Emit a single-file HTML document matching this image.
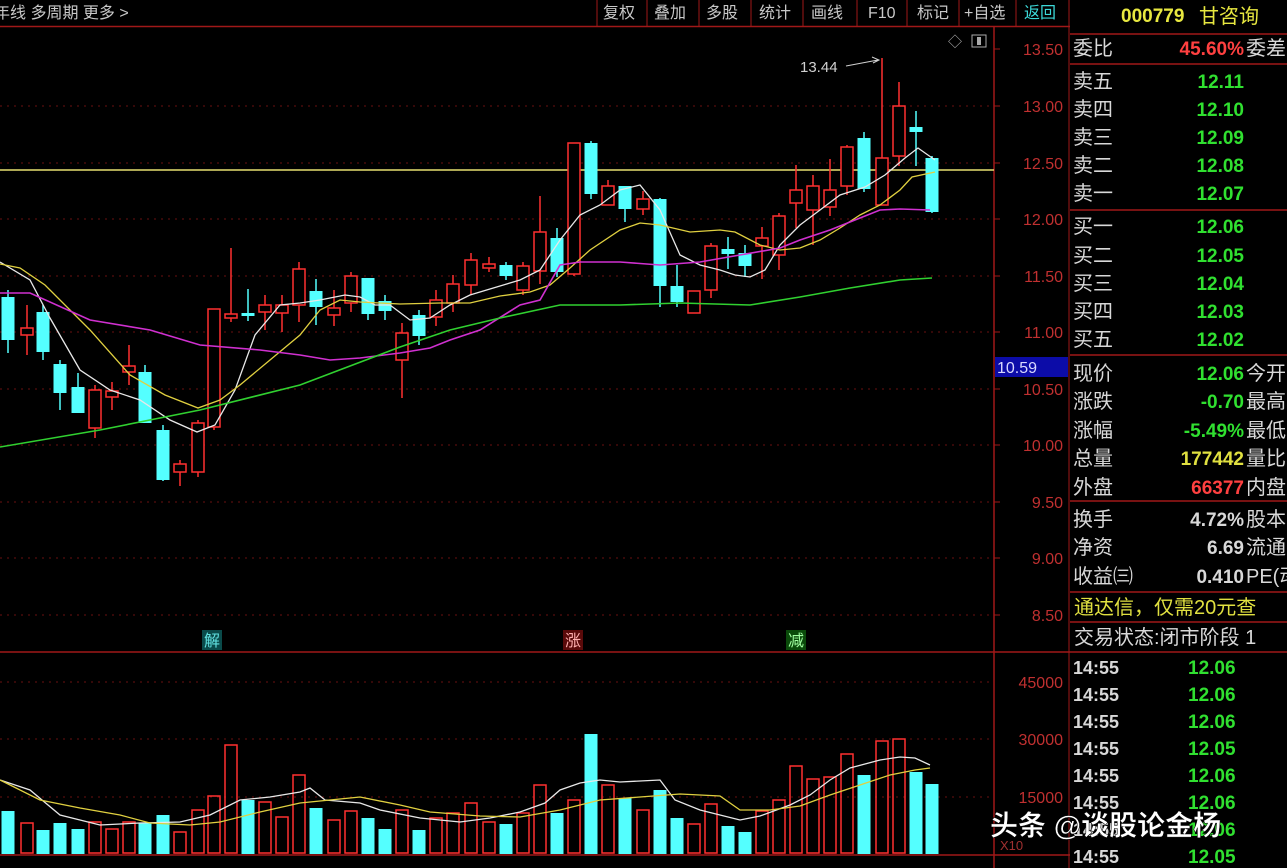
<!DOCTYPE html>
<html><head><meta charset="utf-8"><style>
html,body{margin:0;padding:0;background:#000;width:1287px;height:868px;overflow:hidden;font-family:"Liberation Sans","Noto Sans CJK SC",sans-serif}
svg text{font-family:"Liberation Sans","Noto Sans CJK SC",sans-serif}
</style></head><body>
<svg id="s" width="1287" height="868" xmlns="http://www.w3.org/2000/svg">
<rect width="1287" height="868" fill="#000"/>
<line x1="0" y1="26.5" x2="1070" y2="26.5" stroke="#a01818" stroke-width="1.5"/>
<text x="-6" y="18" fill="#c8c8c8" font-size="16">年线 多周期 更多 &gt;</text>
<g stroke="#a01818" stroke-width="1">
<line x1="597" y1="0" x2="597" y2="26"/><line x1="647" y1="0" x2="647" y2="26"/><line x1="699" y1="0" x2="699" y2="26"/><line x1="751" y1="0" x2="751" y2="26"/><line x1="803" y1="0" x2="803" y2="26"/><line x1="857" y1="0" x2="857" y2="26"/><line x1="907" y1="0" x2="907" y2="26"/><line x1="959" y1="0" x2="959" y2="26"/><line x1="1016" y1="0" x2="1016" y2="26"/><line x1="1069" y1="0" x2="1069" y2="868"/>
</g>
<g fill="#c8c8c8" font-size="16">
<text x="603" y="18">复权</text><text x="654" y="18">叠加</text><text x="706" y="18">多股</text><text x="759" y="18">统计</text><text x="811" y="18">画线</text><text x="868" y="18">F10</text><text x="917" y="18">标记</text><text x="964" y="18">+自选</text><text x="1024" y="18" fill="#3cd8d8">返回</text>
</g>
<line x1="994" y1="27" x2="994" y2="868" stroke="#a01818" stroke-width="1.5"/>
<line x1="0" y1="652" x2="1070" y2="652" stroke="#a01818" stroke-width="1.5"/>
<line x1="0" y1="855" x2="1070" y2="855" stroke="#a01818" stroke-width="1.5"/>
<g id="grid" stroke="#6a1010" stroke-width="1" stroke-dasharray="2,5"></g>
<g fill="#c03030" font-size="16" text-anchor="end" id="ax"></g>
<rect x="995" y="357" width="73" height="20" fill="#0c0ca8"/>
<text x="997" y="373" fill="#d8d8ff" font-size="16">10.59</text>
<text x="948" y="47" fill="#aaa" font-size="14">◇</text>
<rect x="972" y="35" width="14" height="12" fill="none" stroke="#aaa"/><rect x="977" y="37" width="4" height="8" fill="#aaa"/>
<line x1="0" y1="170" x2="994" y2="170" stroke="#e8e070" stroke-width="1.5"/>
<g id="c"></g>
<g id="v"></g>
<g fill="none" stroke-width="1.3">
<polyline stroke="#e8e8e8" points="0,262 30,280 50,318 80,370 110,390 140,400 170,420 197,432 215,425 235,390 255,335 280,305 300,303 320,300 345,295 360,297 375,305 390,305 410,320 430,318 450,305 470,295 500,286 520,280 540,270 560,240 580,215 600,205 620,190 640,185 660,210 680,255 700,265 720,270 735,275 750,277 765,270 780,245 800,225 820,210 840,195 865,187 885,175 905,158 918,148 935,160"/>
<polyline stroke="#e0d040" points="0,264 20,268 45,285 90,330 130,375 165,395 198,408 220,400 240,385 270,360 300,335 320,310 340,300 360,302 400,304 440,303 470,303 500,296 530,292 550,285 570,268 590,250 620,230 640,223 660,225 690,232 720,230 735,232 760,245 780,250 800,248 820,240 840,228 860,215 880,205 900,190 912,177 935,172"/>
<polyline stroke="#d030d0" stroke-width="1.6" points="0,293 30,293 90,320 150,330 200,345 260,350 300,355 330,360 360,358 400,353 430,348 450,340 480,330 520,305 540,300 560,265 580,262 620,262 660,265 700,262 740,255 780,248 800,240 830,230 850,222 880,210 900,209 930,210"/>
<polyline stroke="#30d030" stroke-width="1.6" points="0,447 100,430 200,410 300,385 400,347 450,330 500,318 560,305 620,305 680,303 750,305 800,297 850,288 900,280 932,278"/>
<polyline stroke="#e8e8e8" points="0,780 30,790 60,815 100,825 140,823 180,822 210,815 240,800 270,797 300,792 310,788 325,800 360,803 380,810 420,818 460,822 490,818 520,812 545,803 560,790 580,783 600,780 620,782 660,780 675,800 700,810 740,820 760,816 790,805 810,795 830,780 850,768 880,760 900,757 915,758 930,765"/>
<polyline stroke="#e0d040" points="0,780 40,800 80,808 120,815 150,823 190,825 220,822 260,812 300,803 340,799 360,797 400,805 430,812 480,816 520,817 560,810 600,800 640,797 680,794 720,796 740,810 770,810 800,806 830,795 860,785 890,775 915,770 930,768"/>
</g>
<text x="800" y="72" fill="#d0d0d0" font-size="15">13.44</text>
<path d="M846 66 L878 60 M872 57 L879 60 L873 63" stroke="#d0d0d0" fill="none"/>
<rect x="202" y="630" width="20" height="20" fill="#0a4a4a"/><text x="204" y="646" fill="#60e0e0" font-size="16">解</text>
<rect x="563" y="630" width="20" height="20" fill="#5a0a0a"/><text x="565" y="646" fill="#ffb0b0" font-size="16">涨</text>
<rect x="786" y="630" width="20" height="20" fill="#0a4a0a"/><text x="788" y="646" fill="#a0ffa0" font-size="16">减</text>
<text x="1000" y="850" fill="#a03030" font-size="13">X10</text>
<g stroke="#a01818" stroke-width="1.5">
<line x1="1070" y1="34" x2="1287" y2="34"/><line x1="1070" y1="64" x2="1287" y2="64"/><line x1="1070" y1="210" x2="1287" y2="210"/><line x1="1070" y1="355" x2="1287" y2="355"/><line x1="1070" y1="501" x2="1287" y2="501"/><line x1="1070" y1="592" x2="1287" y2="592"/><line x1="1070" y1="622" x2="1287" y2="622"/><line x1="1070" y1="652" x2="1287" y2="652"/>
</g>
<text x="1121" y="22" fill="#e8e840" font-size="19" font-weight="bold">000779</text><text x="1199" y="23" fill="#e8e840" font-size="20">甘咨询</text>
<g font-size="20" fill="#d8d8d8" id="lab"></g>
<text x="1074" y="614" fill="#e0e040" font-size="20">通达信，仅需20元查</text>
<text x="1074" y="644" fill="#d8d8d8" font-size="20">交易状态:闭市阶段 1</text>
<text x="990" y="835" fill="#fff" font-size="28" font-weight="bold" stroke="#000" stroke-width="0.5">头条 @谈股论金杨</text>
</svg>
<script>
var NS="http://www.w3.org/2000/svg";
function el(p,t,a,txt){var e=document.createElementNS(NS,t);for(var k in a)e.setAttribute(k,a[k]);if(txt!=null)e.textContent=txt;document.getElementById(p).appendChild(e);return e;}
var lv=[[49,"13.50"],[106,"13.00"],[163,"12.50"],[219,"12.00"],[276,"11.50"],[332,"11.00"],[389,"10.50"],[445,"10.00"],[502,"9.50"],[558,"9.00"],[615,"8.50"]];
lv.forEach(function(l){if(l[0]>60)el("grid","line",{x1:0,y1:l[0],x2:994,y2:l[0]});el("ax","text",{x:1063,y:l[0]+6},l[1]);el("grid","line",{x1:994,y1:l[0],x2:1000,y2:l[0],"stroke-dasharray":"none",stroke:"#a01818"});});
[[682,"45000"],[739,"30000"],[797,"15000"]].forEach(function(l){el("grid","line",{x1:0,y1:l[0],x2:994,y2:l[0]});el("ax","text",{x:1063,y:l[0]+6},l[1]);});
var C=[[8,0,297,340,290,353,811],[27,1,328,335,305,355,823],[43,0,312,352,305,360,830],[60,0,364,393,360,410,823],[78,0,387,413,373,413,829],[95,1,390,428,385,438,822],[112,1,391,397,382,410,829],[129,1,366,372,345,385,822],[145,0,372,423,365,423,823],[163,0,430,480,425,481,815],[180,1,464,472,460,486,832],[198,1,423,472,420,477,810],[214,1,309,427,309,430,796],[231,1,314,318,248,322,745],[248,0,313,316,289,321,800],[265,1,305,312,295,330,802],[282,1,305,313,295,332,817],[299,1,269,305,262,322,775],[316,0,291,307,279,325,808],[334,1,308,315,290,326,820],[351,1,276,303,272,312,811],[368,0,278,314,278,320,818],[385,0,301,311,295,320,829],[402,1,333,360,323,398,810],[419,0,315,336,310,345,830],[436,1,300,317,290,326,818],[453,1,284,303,275,312,813],[471,1,260,285,253,295,803],[489,1,264,268,257,272,822],[506,0,265,276,262,280,824],[523,1,266,290,262,295,813],[540,1,232,271,196,284,785],[557,0,238,272,228,277,813],[574,1,143,274,143,276,800],[591,0,143,194,141,199,734],[608,1,186,205,180,205,785],[625,0,186,209,186,222,798],[643,1,199,209,191,215,810],[660,0,199,286,198,307,790],[677,0,286,302,265,307,818],[694,1,291,313,291,313,824],[711,1,246,290,243,298,804],[728,0,249,254,237,269,826],[745,0,253,266,245,277,832],[762,1,238,246,227,279,811],[779,1,216,255,213,270,800],[796,1,190,203,165,228,766],[813,1,186,210,175,245,779],[830,1,190,207,159,216,777],[847,1,147,186,145,195,754],[864,0,138,189,132,192,775],[882,1,158,205,58,205,741],[899,1,106,156,82,166,739],[916,0,127,132,111,166,772],[932,0,158,212,156,213,784]];
C.forEach(function(c){var col=c[1]?"#ff3030":"#54ffff";
el("c","line",{x1:c[0],y1:c[4],x2:c[0],y2:c[2],stroke:col,"stroke-width":1.5});
el("c","line",{x1:c[0],y1:c[3],x2:c[0],y2:c[5],stroke:col,"stroke-width":1.5});
if(c[1])el("c","rect",{x:c[0]-6,y:c[2],width:12,height:Math.max(c[3]-c[2],2),fill:"#000",stroke:col,"stroke-width":1.5});
else el("c","rect",{x:c[0]-6.5,y:c[2],width:13,height:Math.max(c[3]-c[2],2),fill:col});
if(c[1])el("v","rect",{x:c[0]-6,y:c[6],width:12,height:853-c[6],fill:"none",stroke:col,"stroke-width":1.5});
else el("v","rect",{x:c[0]-6.5,y:c[6],width:13,height:854-c[6],fill:col});
});
var L=[["委比",47,"45.60%","#ff4040","委差"],["卖五",88,"12.11","#30e030",""],["卖四",116,"12.10","#30e030",""],["卖三",144,"12.09","#30e030",""],["卖二",172,"12.08","#30e030",""],["卖一",200,"12.07","#30e030",""],["买一",233,"12.06","#30e030",""],["买二",262,"12.05","#30e030",""],["买三",290,"12.04","#30e030",""],["买四",318,"12.03","#30e030",""],["买五",346,"12.02","#30e030",""],["现价",380,"12.06","#30e030","今开"],["涨跌",408,"-0.70","#30e030","最高"],["涨幅",437,"-5.49%","#30e030","最低"],["总量",465,"177442","#e0e040","量比"],["外盘",494,"66377","#ff4040","内盘"],["换手",526,"4.72%","#d8d8d8","股本"],["净资",554,"6.69","#d8d8d8","流通"],["收益㈢",583,"0.410","#d8d8d8","PE(动"]];
L.forEach(function(r){var y=r[1]+(r[0]=="委比"?8:0);el("lab","text",{x:1073,y:y},r[0]);
el("lab","text",{x:1244,y:y,fill:r[3],"text-anchor":"end","font-weight":"bold","font-size":19},r[2]);
if(r[4])el("lab","text",{x:1246,y:y},r[4]);});
var T=["12.06","12.06","12.06","12.05","12.06","12.06","12.06","12.05"];
T.forEach(function(t,i){var y=674+i*27;el("lab","text",{x:1073,y:y,"font-size":18,"font-weight":"bold"},"14:55");el("lab","text",{x:1188,y:y,fill:"#30e030","font-size":19,"font-weight":"bold"},t);});
</script>
</body></html>
